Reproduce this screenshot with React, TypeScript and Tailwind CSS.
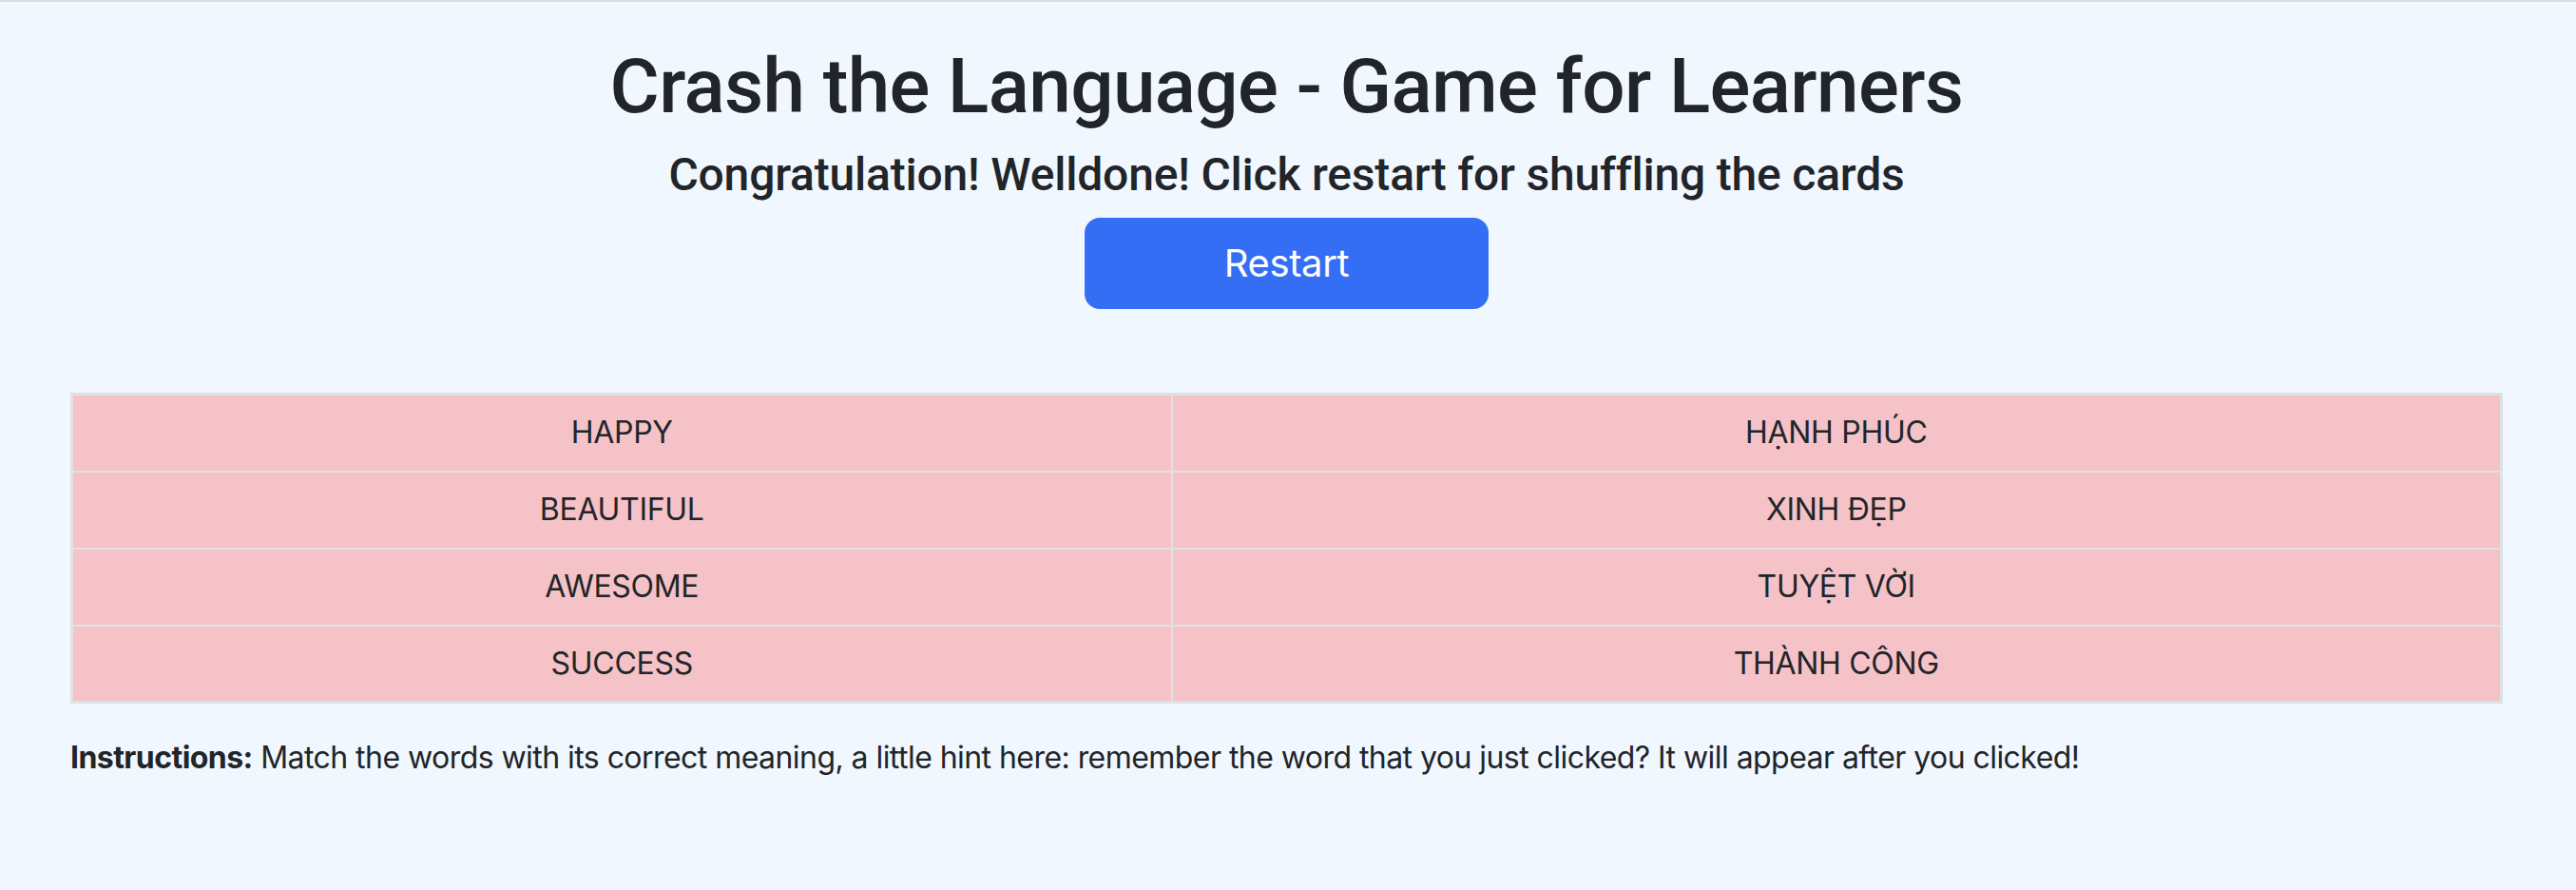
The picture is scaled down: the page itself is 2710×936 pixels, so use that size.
import React from "react";

const rows: [string, string][] = [
  ["HAPPY", "HẠNH PHÚC"],
  ["BEAUTIFUL", "XINH ĐẸP"],
  ["AWESOME", "TUYỆT VỜI"],
  ["SUCCESS", "THÀNH CÔNG"],
];

export default function App() {
  return (
    <div
      className="min-h-[936px] w-full bg-[#f1f7fe] border-t-2 border-[#d9dce1] text-[#212529]"
      style={{ fontFamily: 'Inter, "Noto Sans", "Liberation Sans", sans-serif' }}
    >
      <div className="pl-[74px] pr-[77px] pt-[41px]">
        <h1
          className="text-center text-[80px] leading-[96px] font-medium tracking-[-0.6px] mb-[16px]"
          style={{ fontFamily: 'Roboto, Inter, sans-serif' }}
        >
          Crash the Language - Game for Learners
        </h1>
        <h4
          className="text-center text-[48px] leading-[58px] font-medium tracking-[-0.2px] mb-[16px]"
          style={{ fontFamily: 'Roboto, Inter, sans-serif' }}
        >
          Congratulation! Welldone! Click restart for shuffling the cards
        </h4>
        <div className="flex justify-center">
          <button className="w-[425px] h-[96px] rounded-[16px] bg-[#346ef5] text-white text-[40px] leading-[60px] tracking-[-0.4px]">
            Restart
          </button>
        </div>
        <table className="mt-[88px] w-full border-collapse border-[3px] border-[#dee2e6] text-[32px] leading-[48px] tracking-[-0.3px]">
          <tbody>
            {rows.map(([a, b]) => (
              <tr key={a} className="bg-[#f5c2c7]">
                <td className="w-[1157px] h-[81px] border-2 border-[#dee2e6] text-center py-[15px]">
                  {a}
                </td>
                <td className="h-[81px] border-2 border-[#dee2e6] text-center py-[15px]">
                  {b}
                </td>
              </tr>
            ))}
          </tbody>
        </table>
        <p className="mt-[33px] text-[32px] leading-[48px] tracking-[-0.55px]">
          <span className="font-bold">Instructions:</span> Match the words with its correct meaning, a little hint
          here: remember the word that you just clicked? It will appear after you clicked!
        </p>
      </div>
    </div>
  );
}
